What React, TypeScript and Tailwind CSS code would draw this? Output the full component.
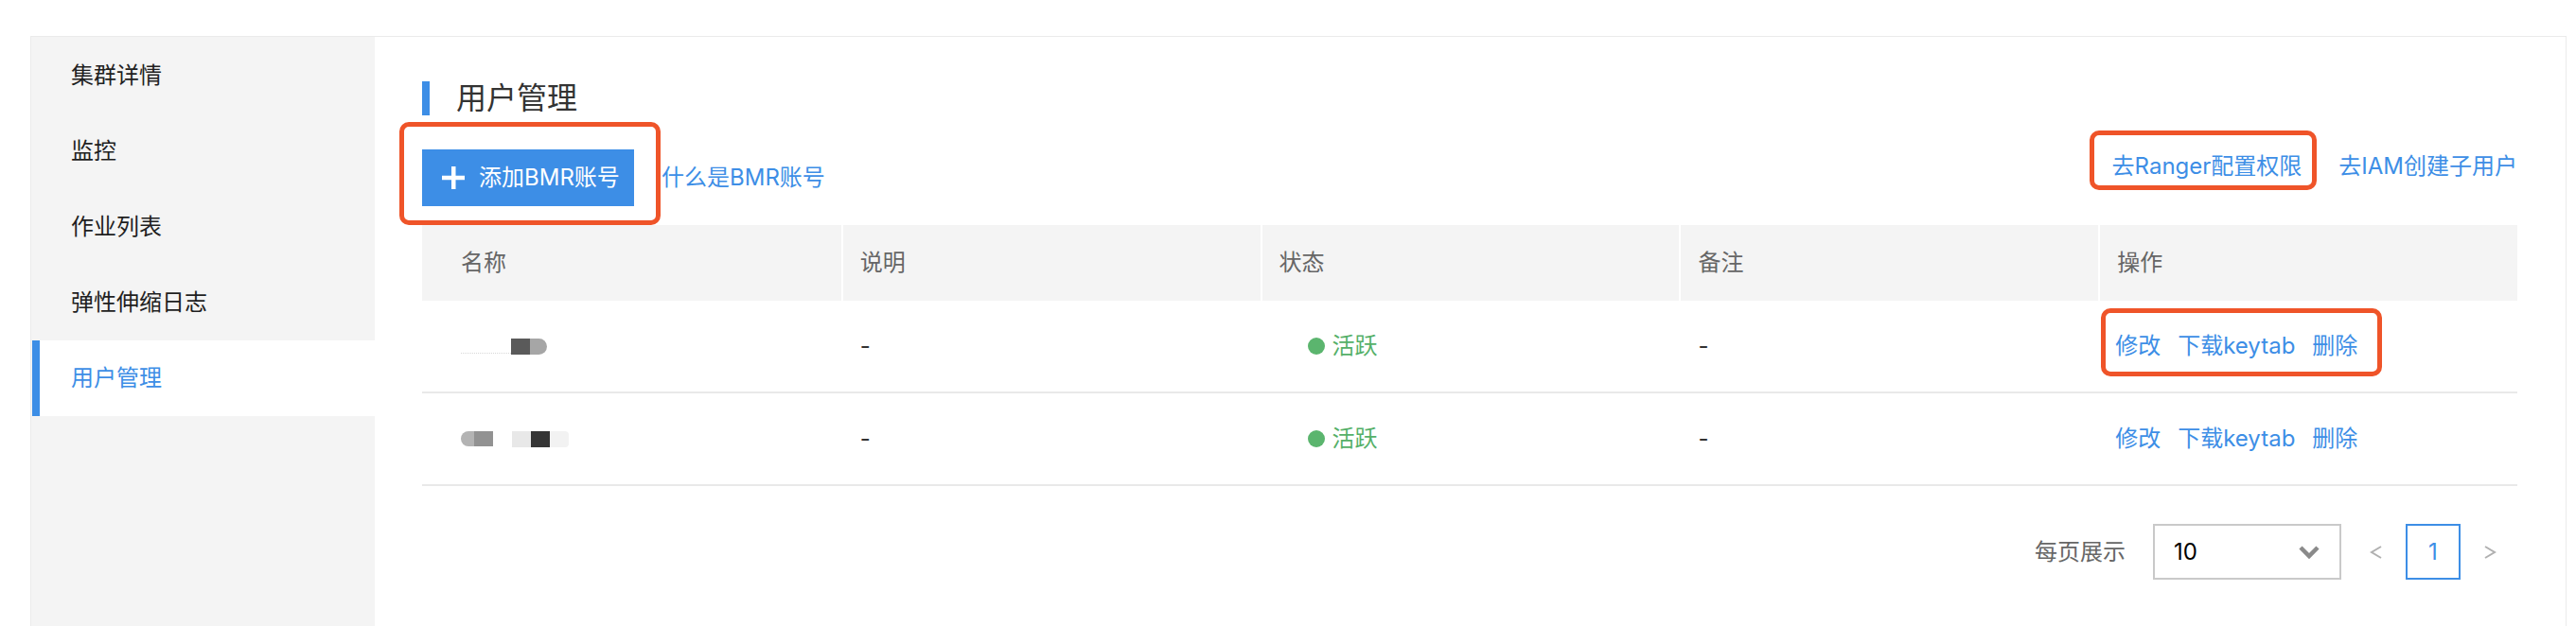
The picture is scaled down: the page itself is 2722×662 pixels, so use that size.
import { ReactNode } from "react";

const BLUE = "#3d8ee6";

const MENU = ["集群详情", "监控", "作业列表", "弹性伸缩日志", "用户管理"];
const COLUMNS = ["名称", "说明", "状态", "备注", "操作"];

// annotation frame drawn over a target element
function Mark({ className, children }: { className: string; children: ReactNode }) {
  return (
    <div className="relative">
      {children}
      <div className={`pointer-events-none absolute rounded-[10px] border-[5px] border-[#ef5429] ${className}`} />
    </div>
  );
}

function Plus() {
  return (
    <svg width="24" height="24" viewBox="0 0 24 24" fill="#fff">
      <rect x="10" y="0" width="4.5" height="24" />
      <rect x="0" y="9.75" width="24" height="4.5" />
    </svg>
  );
}

function Actions() {
  return (
    <div className="flex items-center gap-[18px] text-[24px] leading-[24px] text-[#3d8ee6]">
      <span>修改</span>
      <span>下载keytab</span>
      <span>删除</span>
    </div>
  );
}

function Status() {
  return (
    <div className="flex items-center gap-[8px] text-[24px] leading-[24px] text-[#55b068]">
      <span className="h-[18px] w-[18px] rounded-full bg-[#5bb56e]" />
      活跃
    </div>
  );
}

// blurred user names
function NameOne() {
  return (
    <div className="flex h-[17px] items-end">
      <span className="mb-[1px] h-[2px] w-[53px] border-b border-dotted border-[#d8d8d8]" />
      <span className="h-[17px] w-[20px] bg-[#5a5a5a]" />
      <span className="h-[17px] w-[18px] rounded-r-full bg-[#a6a6a6]" />
    </div>
  );
}

function NameTwo() {
  return (
    <div className="flex h-[17px] items-center">
      <span className="h-[16px] w-[14px] rounded-l-full bg-[#b3b3b3]" />
      <span className="h-[16px] w-[20px] bg-[#929292]" />
      <span className="w-[20px]" />
      <span className="h-[17px] w-[20px] bg-[#e8e8e8]" />
      <span className="h-[17px] w-[20px] bg-[#353535]" />
      <span className="h-[17px] w-[20px] rounded-r-[4px] bg-[#f2f2f2]" />
    </div>
  );
}

function Row({ name, marked }: { name: ReactNode; marked?: boolean }) {
  return (
    <div className="grid h-[98px] grid-cols-5 border-b-2 border-[#e9e9e9] text-[24px] leading-[24px] text-[#333]">
      <div className="flex items-center pl-[41px]">{name}</div>
      <div className="flex items-center pl-[20px]">-</div>
      <div className="flex items-center pl-[50px]">
        <Status />
      </div>
      <div className="flex items-center pl-[20px]">-</div>
      <div className="flex items-center pl-[18px]">
        {marked ? (
          <Mark className="-left-[15px] -right-[26px] -top-[28px] -bottom-[20px]">
            <Actions />
          </Mark>
        ) : (
          <Actions />
        )}
      </div>
    </div>
  );
}

export default function App() {
  return (
    <div className="h-[662px] overflow-hidden bg-white pl-[32px] pr-[10px] pt-[38px] [font-family:Inter,'Noto_Sans_CJK_SC',sans-serif]">
      <div className="flex min-h-[700px] border border-[#ebebeb]">
        {/* Sidebar */}
        <div className="w-[363px] bg-[#f4f4f4] pl-[1px] pt-[1px]">
          {MENU.map((item, i) =>
            i === MENU.length - 1 ? (
              <div
                key={item}
                className="flex h-[80px] items-center border-l-8 border-[#3d8ee6] bg-white pl-[33px] text-[24px] leading-[24px] text-[#3d8ee6]"
              >
                {item}
              </div>
            ) : (
              <div key={item} className="flex h-[80px] items-center pl-[41px] text-[24px] leading-[24px] text-[#1f1f1f]">
                {item}
              </div>
            )
          )}
        </div>

        {/* Main */}
        <div className="flex-1 bg-white pl-[50px] pr-[51px] pt-[47px]">
          <div className="flex h-[36px] items-center">
            <span className="h-[36px] w-[8px] bg-[#3d8ee6]" />
            <h1 className="ml-[28px] text-[32px] leading-[36px] text-[#333]">用户管理</h1>
          </div>

          <div className="mt-[36px] flex items-start justify-between">
            <div className="flex items-center">
              <Mark className="-left-[24px] -right-[28px] -top-[29px] -bottom-[20px]">
                <button className="flex h-[60px] w-[224px] items-center bg-[#3d8ee6] pl-[21px] text-[24px] leading-[24px] text-white">
                  <Plus />
                  <span className="ml-[15px]">添加BMR账号</span>
                </button>
              </Mark>
              <a className="ml-[29px] text-[24px] leading-[24px]" style={{ color: BLUE }}>
                什么是BMR账号
              </a>
            </div>
            <div className="mt-[6px] flex items-center gap-[39px] text-[24px] leading-[24px] text-[#3d8ee6]">
              <Mark className="-left-[24px] -right-[16px] -top-[26px] -bottom-[13px]">
                <a>去Ranger配置权限</a>
              </Mark>
              <a>去IAM创建子用户</a>
            </div>
          </div>

          {/* Table */}
          <div className="mt-[20px]">
            <div className="grid h-[80px] grid-cols-5 bg-[#f4f4f4] text-[24px] leading-[24px] text-[#666]">
              {COLUMNS.map((col, i) => (
                <div
                  key={col}
                  className={i === 0 ? "flex items-center pl-[41px]" : "flex items-center border-l-2 border-white pl-[18px]"}
                >
                  {col}
                </div>
              ))}
            </div>
            <Row name={<NameOne />} marked />
            <Row name={<NameTwo />} />
          </div>

          {/* Pagination */}
          <div className="mt-[40px] flex items-center justify-end">
            <span className="text-[24px] leading-[24px] text-[#666]">每页展示</span>
            <div className="ml-[29px] flex h-[59px] w-[199px] items-center justify-between border-2 border-[#c9c9c9] pl-[20px] pr-[20px]">
              <span className="text-[24px] leading-[24px] text-black">10</span>
              <svg width="24" height="16" viewBox="0 0 24 16">
                <polyline points="3,3 12,12 21,3" fill="none" stroke="#8a8a8a" strokeWidth="4.5" />
              </svg>
            </div>
            <div className="ml-[8px] flex h-[59px] w-[58px] items-center justify-center">
              <svg width="14" height="20" viewBox="0 0 14 20">
                <polyline points="12,4 2,10 12,16" fill="none" stroke="#b0b0b0" strokeWidth="2" />
              </svg>
            </div>
            <div className="ml-[2px] flex h-[59px] w-[58px] items-center justify-center border-2 border-[#3d8ee6] text-[24px] leading-[24px] text-[#3d8ee6]">
              1
            </div>
            <div className="ml-[2px] flex h-[59px] w-[58px] items-center justify-center">
              <svg width="14" height="20" viewBox="0 0 14 20">
                <polyline points="2,4 12,10 2,16" fill="none" stroke="#b0b0b0" strokeWidth="2" />
              </svg>
            </div>
          </div>
        </div>
      </div>
    </div>
  );
}
